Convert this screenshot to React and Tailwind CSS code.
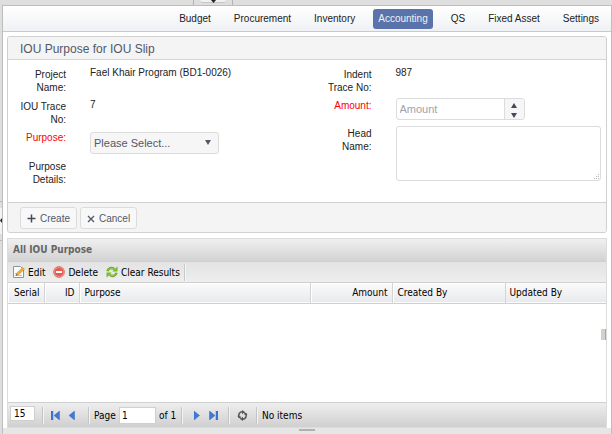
import React from "react";

const NAV = ["Budget", "Procurement", "Inventory", "Accounting", "QS", "Fixed Asset", "Settings"];

function NavBar() {
  return (
    <nav className="flex h-[26px] items-center justify-end gap-[13px] border-b border-[#c9c9c9] bg-linear-to-b from-white to-[#eff1f4] pr-[7px]">
      {NAV.map((item) => (
        <a
          key={item}
          href="#"
          className={
            item === "Accounting"
              ? "rounded-[3px] bg-[#5a73aa] px-[5px] text-[10px] leading-5 text-[#eef1f7]"
              : "px-[5px] text-[10px] leading-5 text-[#222]"
          }
        >
          {item}
        </a>
      ))}
    </nav>
  );
}

function Field({ label, id, required, className, children }) {
  const Tag = id ? "label" : "span";
  return (
    <div className={`flex items-start gap-6 ${className}`}>
      <Tag
        htmlFor={id}
        className={`w-[52px] shrink-0 pt-px text-right text-[10px] leading-[13px] ${required ? "text-[#ff0000]" : "text-[#222]"}`}
      >
        {label}
      </Tag>
      {children}
    </div>
  );
}

function Value({ children }) {
  return <span className="text-[10px] leading-[12px] text-[#222]">{children}</span>;
}

function PurposeForm() {
  return (
    <form className="rounded-[3px] border border-[#d0d0d0] bg-white" onSubmit={(e) => e.preventDefault()}>
      <h1 className="h-[23px] rounded-t-[3px] border-b border-[#d5d5d5] bg-[#f4f4f4] pl-3 text-[12px] leading-[24px] text-[#515967]">
        IOU Purpose for IOU Slip
      </h1>
      <div className="grid h-[142px] grid-cols-2 gap-x-6 pt-[7px] pr-[5px] pl-[6px]">
        <div>
          <Field label="Project Name:" className="h-8">
            <Value>Fael Khair Program (BD1-0026)</Value>
          </Field>
          <Field label="IOU Trace No:" className="h-[31px]">
            <Value>7</Value>
          </Field>
          <Field label="Purpose:" id="purpose" required className="h-[29px]">
            <div className="relative w-[129px]">
              <select
                id="purpose"
                className="h-[22px] w-full appearance-none rounded-[3px] border border-[#dcdcdc] bg-[#f6f6f6] pl-[3px] text-[11px] text-[#515967]"
              >
                <option>Please Select...</option>
              </select>
              <svg className="pointer-events-none absolute top-[10px] right-2 h-[5px] w-[6px]" viewBox="0 0 6 5">
                <path d="M0 0h6L3 5z" fill="#515967" />
              </svg>
            </div>
          </Field>
          <Field label="Purpose Details:" className="" />
        </div>
        <div>
          <Field label="Indent Trace No:" className="h-[31px]">
            <Value>987</Value>
          </Field>
          <Field label="Amount:" id="amount" required className="h-7">
            <div className="flex h-[22px] w-[129px] overflow-hidden rounded-[3px] border border-[#dcdcdc]">
              <input
                id="amount"
                placeholder="Amount"
                className="min-w-0 flex-1 pl-[3px] text-[11px] text-[#515967] placeholder:text-[#a0a3ab]"
              />
              <div className="flex w-5 flex-col border-l border-[#dcdcdc] bg-[#f6f6f6]">
                <button type="button" aria-label="Increase" className="flex flex-1 items-end justify-center pb-px">
                  <svg className="h-[5px] w-[6px]" viewBox="0 0 6 5">
                    <path d="M0 5h6L3 0z" fill="#414b5a" />
                  </svg>
                </button>
                <button type="button" aria-label="Decrease" className="flex flex-1 items-end justify-center pb-px">
                  <svg className="h-[5px] w-[6px]" viewBox="0 0 6 5">
                    <path d="M0 0h6L3 5z" fill="#414b5a" />
                  </svg>
                </button>
              </div>
            </div>
          </Field>
          <Field label="Head Name:" id="head" className="">
            <div className="relative flex flex-1">
              <textarea
                id="head"
                className="h-[55px] w-full resize-none rounded-[3px] border border-[#dcdcdc] bg-white p-1 text-[11px] text-[#515967]"
              />
              <svg className="pointer-events-none absolute right-px bottom-px h-[6px] w-[6px]" viewBox="0 0 6 6">
                <path d="M4 0h1v1H4zM4 2h1v1H4zM4 4h1v1H4zM2 2h1v1H2zM2 4h1v1H2zM0 4h1v1H0z" fill="#b5b5b5" />
              </svg>
            </div>
          </Field>
        </div>
      </div>
      <div className="flex h-[30px] items-start gap-[3px] rounded-b-[3px] border-t border-[#d0d0d0] bg-[#f4f4f4] pt-1 pl-3">
        <button className="flex h-[22px] items-center gap-1 rounded-[3px] border border-[#dcdcdc] bg-[#f8f8f8] px-[6px] text-[10px] text-[#515967]">
          <svg className="mt-px h-[9px] w-[9px]" viewBox="0 0 9 9">
            <path d="M4.5.5v8M.5 4.500h8" stroke="#414b5a" strokeWidth="1.500" />
          </svg>
          Create
        </button>
        <button
          type="button"
          className="flex h-[22px] items-center gap-1 rounded-[3px] border border-[#dcdcdc] bg-[#f8f8f8] px-[6px] text-[10px] text-[#515967]"
        >
          <svg className="mt-px h-[8px] w-[8px]" viewBox="0 0 8 8">
            <path d="M1 1l6 6M7 1L1 7" stroke="#515967" strokeWidth="1.300" />
          </svg>
          Cancel
        </button>
      </div>
    </form>
  );
}

function EditIcon() {
  return (
    <svg className="h-3 w-3" viewBox="0 0 12 12">
      <path d="M.5.5h7l3 3v8H.5z" fill="#fafbfc" stroke="#8c959c" />
      <path d="M2 9.500h7M2 7.500h3" stroke="#b9c8d3" />
      <path d="M3 9.500l.8-2.600L9.800 1.500l1.700 1.700-6 5.500z" fill="#f5ae2d" stroke="#bb8022" strokeWidth=".5" />
      <path d="M3 9.500l.5-1.600 1 1.100z" fill="#4d4335" />
    </svg>
  );
}

function DeleteIcon() {
  return (
    <svg className="h-3 w-3" viewBox="0 0 12 12">
      <circle cx="6" cy="6" r="5.400" fill="#e85a50" stroke="#d98079" />
      <circle cx="6" cy="6" r="4.500" fill="none" stroke="#f19a93" strokeWidth=".7" />
      <path d="M3 5h6v2H3z" fill="#fff" />
    </svg>
  );
}

function ClearIcon() {
  return (
    <svg className="h-3 w-3" viewBox="0 0 12 12">
      <path d="M1.500 5.200C2.200 2.200 5.500 1.200 8.300 3M10.500 6.800C9.800 9.800 6.500 10.800 3.700 9" fill="none" stroke="#6fa824" strokeWidth="2.500" />
      <path d="M11.500.3v5.200H6.300zM.5 11.700V6.500h5.200z" fill="#7ab92a" />
      <path d="M2 4.400C3 2.400 5.200 1.700 7.400 2.600M10 7.600C9 9.600 6.800 10.300 4.600 9.400" fill="none" stroke="#b5dc6c" strokeWidth=".7" />
    </svg>
  );
}

function ToolButton({ icon, children }) {
  return (
    <button className="flex items-center gap-[3px] text-[10px] text-black">
      {icon}
      {children}
    </button>
  );
}

function Separator() {
  return <span className="h-[17px] w-[2px] border-l border-[#c4c4c4] bg-[#f4f4f4]" />;
}

function PagerIcon({ label, wide, d }) {
  return (
    <button aria-label={label}>
      <svg
        className={wide ? "h-[9px] w-[9px]" : "h-[9px] w-[6px]"}
        viewBox={wide ? "0 0 9 9" : "0 0 6 9"}
      >
        <path d={d} fill="#3f78dc" stroke="#285bbd" strokeWidth=".4" />
      </svg>
    </button>
  );
}

const HEAD = "border-r border-[#d4d4d4] pr-1 pl-[5px] font-normal shadow-[inset_1px_1px_0_#fff]";

function PurposeGrid() {
  return (
    <section className="relative mt-[5px] flex flex-1 flex-col border border-[#dcdcdc] bg-white font-['DejaVu_Sans_Condensed','DejaVu_Sans',sans-serif] text-[10px] text-black">
      <h2 className="h-[23px] border-b border-[#cfcfcf] bg-linear-to-b from-[#f0f0f0] to-[#d2d2d2] pl-[5px] text-[10px] leading-[22px] font-bold text-[#666]">
        All IOU Purpose
      </h2>
      <div className="flex h-[21px] items-center gap-2 border-b border-[#d0d0d0] bg-linear-to-b from-[#e3e3e3] to-[#eeeeee] pl-[5px]">
        <ToolButton icon={<EditIcon />}>Edit</ToolButton>
        <ToolButton icon={<DeleteIcon />}>Delete</ToolButton>
        <ToolButton icon={<ClearIcon />}>Clear Results</ToolButton>
        <span className="-ml-1 h-[17px] w-[2px] border-l border-[#cacaca] bg-[#f4f4f4]" />
      </div>
      <table className="w-full table-fixed">
        <thead>
          <tr className="h-[20px] border-b border-[#cfcfcf] bg-linear-to-b from-[#fbfbfb] to-[#e9eaed]">
            <th className={`w-[36px] text-right ${HEAD}`}>Serial</th>
            <th className={`w-[35px] text-right ${HEAD}`}>ID</th>
            <th className={`text-left ${HEAD}`}>Purpose</th>
            <th className={`w-[82px] text-right ${HEAD}`}>Amount</th>
            <th className={`w-[113px] text-left ${HEAD}`}>Created By</th>
            <th className="w-[101px] px-[4px] text-left font-normal">Updated By</th>
          </tr>
        </thead>
        <tbody />
      </table>
      <div className="flex-1" />
      <span className="absolute top-[90px] right-0 h-[11px] w-[5px] border-r border-[#a9a79f] bg-[#d3d1c9]" />
      <div className="flex h-[25px] items-center border-t border-[#d0d0d0] bg-linear-to-b from-[#eeeeee] to-[#d0d0d0] pl-[2px]">
        <input
          aria-label="Page size"
          defaultValue="15"
          className="mr-[7px] mb-1 h-[15px] w-[25px] border border-[#cfcfcf] bg-white px-[3px]"
        />
        <Separator />
        <div className="flex w-[44px] gap-[9px] pl-[7px]">
          <PagerIcon label="First page" wide d="M0 0h2v9H0zM8.500 0v9L3 4.500z" />
          <PagerIcon label="Previous page" d="M5.500 0v9L0 4.500z" />
        </div>
        <Separator />
        <label htmlFor="page" className="ml-1 w-[25px] pt-px">
          Page
        </label>
        <input id="page" defaultValue="1" className="h-[17px] w-[37px] border border-[#cfcfcf] bg-white px-[2px]" />
        <span className="ml-[3px] w-[22px] pt-px">of 1</span>
        <Separator />
        <div className="flex w-[45px] gap-[9px] pl-[11px]">
          <PagerIcon label="Next page" d="M0 0v9l5.500-4.500z" />
          <PagerIcon label="Last page" wide d="M7 0h2v9H7zM.5 0v9L6 4.500z" />
        </div>
        <Separator />
        <button aria-label="Refresh" className="mr-2 ml-[7px]">
          <svg className="h-[11px] w-[11px]" viewBox="0 0 11 11">
            <path d="M2.300 7.500A3.700 3.700 0 0 1 5.500 1.800M8.700 3.500A3.700 3.700 0 0 1 5.500 9.200" fill="none" stroke="#555" strokeWidth="1.600" />
            <path d="M5 0l3 2-3 2.200zM6 11L3 9l3-2.200zM.3 6.500h3.700L3.500 9zM10.700 4.500H7L7.500 2z" fill="#555" />
          </svg>
        </button>
        <Separator />
        <span className="ml-1 pt-px">No items</span>
      </div>
    </section>
  );
}

export default function App() {
  return (
    <div className="flex min-h-screen flex-col bg-[#dedede] font-['Liberation_Sans',Arial,sans-serif]">
      <div className="flex h-[5px] pl-[193px]">
        <div className="flex w-10 justify-center border-x border-[#b4b4b4]">
          <button
            aria-label="Collapse header"
            className="flex h-[3px] w-[26px] justify-center rounded-b-[3px] border-b border-[#c4c4c4] bg-[#f1f1f1]"
          >
            <svg className="h-[3px] w-[5px]" viewBox="0 0 5 3">
              <path d="M0 0h5L2.500 3z" fill="#222" />
            </svg>
          </button>
        </div>
      </div>
      <div className="flex flex-1">
        <div className="w-[2px] pt-[196px]">
          <button aria-label="Expand sidebar" className="flex h-10 w-[2px] items-center border-y border-[#b8b8b8]">
            <svg className="h-[26px] w-[2px]" viewBox="0 0 2 26">
              <path d="M0 0h2v26H0z" fill="#f3f3f3" />
              <path d="M2 10v5L0 12.500z" fill="#222" />
            </svg>
          </button>
        </div>
        <main className="flex min-w-0 flex-1 flex-col border-x border-t border-[#bdbdbd] bg-white">
          <NavBar />
          <div className="flex flex-1 flex-col px-1 pt-1">
            <PurposeForm />
            <PurposeGrid />
          </div>
          <div className="flex h-[6px] justify-center bg-[#e6e6e6] pt-px">
            <span className="h-[2px] w-4 bg-[#b0b0b0]" />
          </div>
        </main>
      </div>
    </div>
  );
}
